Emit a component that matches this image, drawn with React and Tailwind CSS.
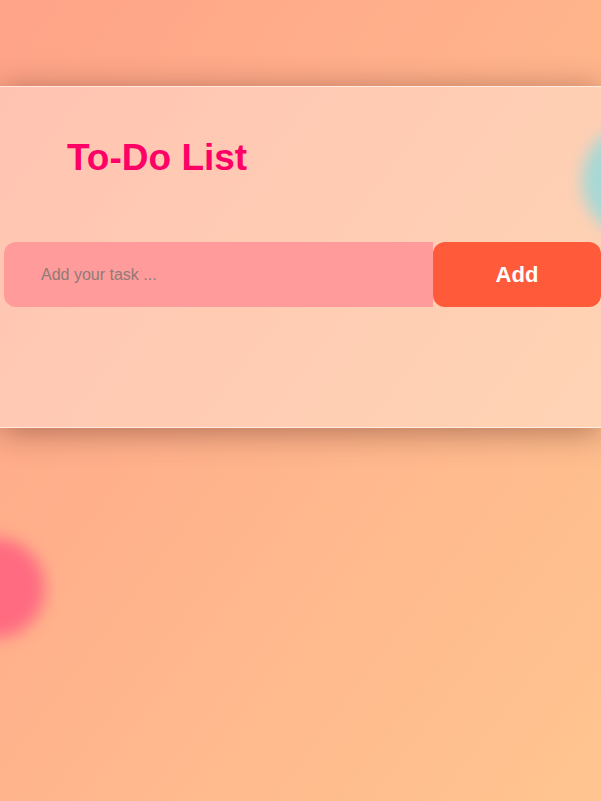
export default function App() {
    return (
        <div className="relative w-full h-[801px] overflow-hidden bg-gradient-to-br from-[#ffa388] to-[#ffc590] font-['Liberation_Sans',Arial,sans-serif]">
            <div className="absolute left-[-55px] top-[538px] w-[100px] h-[100px] rounded-full bg-[#ff6b81] blur-[8px]" />
            <div className="pt-[86px]">
                <div className="relative border-y border-white/60 bg-white/35 shadow-[0_4px_30px_rgba(80,30,20,0.45)] h-[342px] overflow-hidden">
                    <div className="absolute left-[582px] top-[36px] w-[115px] h-[115px] rounded-full bg-[#a6d8d6] blur-[8px]" />
                    <h1 className="relative pl-[67px] pt-[48px] text-[37px] leading-[45px] font-bold text-[#ff0066]">To-Do List</h1>
                    <div className="relative mt-[62px] ml-[4px] flex h-[65px]">
                        <input
                            className="flex-1 h-full rounded-l-[12px] bg-[#ff9b9a] pl-[37px] text-[16px] text-[#555] placeholder:text-[#8e7b78] outline-none"
                            placeholder="Add your task ..."
                        />
                        <button className="w-[168px] h-full rounded-[12px] bg-[#ff5a3a] text-white text-[22px] font-bold">
                            Add
                        </button>
                    </div>
                </div>
            </div>
        </div>
    );
}
